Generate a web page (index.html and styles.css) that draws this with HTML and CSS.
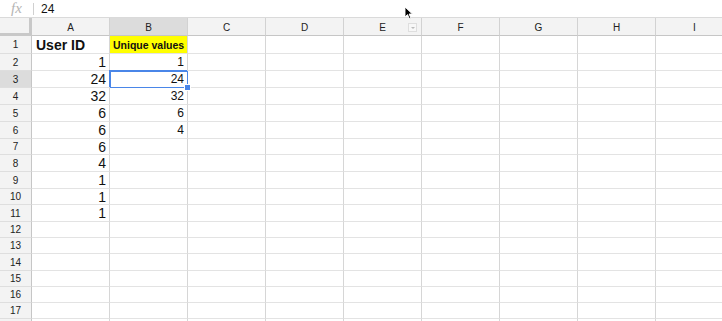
FILE: index.html
```html
<!DOCTYPE html>
<html>
<head>
<meta charset="utf-8">
<link rel="stylesheet" href="styles.css">
</head>
<body>
<div class="app">
  <div class="fbar">
    <div class="fx">fx</div>
    <div class="fsep"></div>
    <div class="fval">24</div>
  </div>
  <div class="sheet">
    <div class="row head">
      <div class="c corner"></div>
      <div class="c ch">A</div>
      <div class="c ch chsel">B</div>
      <div class="c ch">C</div>
      <div class="c ch">D</div>
      <div class="c ch hasdrop">E<span class="drop"></span></div>
      <div class="c ch">F</div>
      <div class="c ch">G</div>
      <div class="c ch">H</div>
      <div class="c ch">I</div>
    </div>
    <div class="row tall">
      <div class="c rh">1</div>
      <div class="c a bold">User ID</div>
      <div class="c yel">Unique values</div>
      <div class="c"></div><div class="c"></div><div class="c"></div><div class="c"></div><div class="c"></div><div class="c"></div><div class="c"></div>
    </div>
    <div class="row">
      <div class="c rh">2</div>
      <div class="c a num">1</div>
      <div class="c b num">1</div>
      <div class="c"></div><div class="c"></div><div class="c"></div><div class="c"></div><div class="c"></div><div class="c"></div><div class="c"></div>
    </div>
    <div class="row">
      <div class="c rh rhsel">3</div>
      <div class="c a num">24</div>
      <div class="c b num sel">24<span class="handle"></span></div>
      <div class="c"></div><div class="c"></div><div class="c"></div><div class="c"></div><div class="c"></div><div class="c"></div><div class="c"></div>
    </div>
    <div class="row">
      <div class="c rh">4</div>
      <div class="c a num">32</div>
      <div class="c b num">32</div>
      <div class="c"></div><div class="c"></div><div class="c"></div><div class="c"></div><div class="c"></div><div class="c"></div><div class="c"></div>
    </div>
    <div class="row">
      <div class="c rh">5</div>
      <div class="c a num">6</div>
      <div class="c b num">6</div>
      <div class="c"></div><div class="c"></div><div class="c"></div><div class="c"></div><div class="c"></div><div class="c"></div><div class="c"></div>
    </div>
    <div class="row">
      <div class="c rh">6</div>
      <div class="c a num">6</div>
      <div class="c b num">4</div>
      <div class="c"></div><div class="c"></div><div class="c"></div><div class="c"></div><div class="c"></div><div class="c"></div><div class="c"></div>
    </div>
    <div class="row short">
      <div class="c rh">7</div>
      <div class="c a num">6</div>
      <div class="c"></div><div class="c"></div><div class="c"></div><div class="c"></div><div class="c"></div><div class="c"></div><div class="c"></div><div class="c"></div>
    </div>
    <div class="row">
      <div class="c rh">8</div>
      <div class="c a num">4</div>
      <div class="c"></div><div class="c"></div><div class="c"></div><div class="c"></div><div class="c"></div><div class="c"></div><div class="c"></div><div class="c"></div>
    </div>
    <div class="row">
      <div class="c rh">9</div>
      <div class="c a num">1</div>
      <div class="c"></div><div class="c"></div><div class="c"></div><div class="c"></div><div class="c"></div><div class="c"></div><div class="c"></div><div class="c"></div>
    </div>
    <div class="row short">
      <div class="c rh">10</div>
      <div class="c a num">1</div>
      <div class="c"></div><div class="c"></div><div class="c"></div><div class="c"></div><div class="c"></div><div class="c"></div><div class="c"></div><div class="c"></div>
    </div>
    <div class="row">
      <div class="c rh">11</div>
      <div class="c a num">1</div>
      <div class="c"></div><div class="c"></div><div class="c"></div><div class="c"></div><div class="c"></div><div class="c"></div><div class="c"></div><div class="c"></div>
    </div>
    <div class="row short">
      <div class="c rh">12</div>
      <div class="c"></div><div class="c"></div><div class="c"></div><div class="c"></div><div class="c"></div><div class="c"></div><div class="c"></div><div class="c"></div><div class="c"></div>
    </div>
    <div class="row short">
      <div class="c rh">13</div>
      <div class="c"></div><div class="c"></div><div class="c"></div><div class="c"></div><div class="c"></div><div class="c"></div><div class="c"></div><div class="c"></div><div class="c"></div>
    </div>
    <div class="row">
      <div class="c rh">14</div>
      <div class="c"></div><div class="c"></div><div class="c"></div><div class="c"></div><div class="c"></div><div class="c"></div><div class="c"></div><div class="c"></div><div class="c"></div>
    </div>
    <div class="row short">
      <div class="c rh">15</div>
      <div class="c"></div><div class="c"></div><div class="c"></div><div class="c"></div><div class="c"></div><div class="c"></div><div class="c"></div><div class="c"></div><div class="c"></div>
    </div>
    <div class="row short">
      <div class="c rh">16</div>
      <div class="c"></div><div class="c"></div><div class="c"></div><div class="c"></div><div class="c"></div><div class="c"></div><div class="c"></div><div class="c"></div><div class="c"></div>
    </div>
    <div class="row short">
      <div class="c rh">17</div>
      <div class="c"></div><div class="c"></div><div class="c"></div><div class="c"></div><div class="c"></div><div class="c"></div><div class="c"></div><div class="c"></div><div class="c"></div>
    </div>
    <div class="row">
      <div class="c rh"></div>
      <div class="c"></div><div class="c"></div><div class="c"></div><div class="c"></div><div class="c"></div><div class="c"></div><div class="c"></div><div class="c"></div><div class="c"></div>
    </div>
  </div>
  <svg class="cursor" width="10" height="14" viewBox="0 0 10 14">
    <path d="M1 1 L1 11 L3.5 8.6 L5.3 12.6 L6.8 11.9 L5.1 8 L8.4 8 Z" fill="#000" stroke="#fff" stroke-width="0.9"/>
  </svg>
</div>
</body>
</html>
```

FILE: styles.css
```css
html, body {
  margin: 0;
  padding: 0;
  background: #ffffff;
}
body {
  width: 722px;
  height: 321px;
  overflow: hidden;
  font-family: "Liberation Sans", Arial, sans-serif;
  color: #222;
}
.app {
  position: relative;
  width: 722px;
  height: 321px;
  overflow: hidden;
}
.fbar {
  height: 17px;
  border-bottom: 1px solid #dadada;
  display: flex;
  align-items: center;
  background: #fff;
}
.fx {
  width: 33px;
  padding-left: 11px;
  box-sizing: border-box;
  font-family: "Liberation Serif", "Times New Roman", serif;
  font-style: italic;
  font-size: 15px;
  color: #b4b4b4;
  line-height: 17px;
}
.fsep {
  width: 1px;
  height: 12px;
  background: #d0d0d0;
}
.fval {
  padding-left: 7px;
  font-size: 12px;
  color: #111;
}
.sheet {
  display: flex;
  flex-direction: column;
}
.row {
  display: grid;
  grid-template-columns: 32px repeat(9, 78px);
  height: 17px;
}
.row.short {
  height: 16px;
}
.row.tall {
  height: 18px;
}
.c {
  box-sizing: border-box;
  border-right: 1px solid #d6d6d6;
  border-bottom: 1px solid #e3e3e3;
  white-space: nowrap;
  overflow: hidden;
  display: flex;
  align-items: center;
}
.row.head {
  height: 18px;
}
.ch {
  background: #f3f3f3;
  border-bottom: 1px solid #c6c6c6;
  border-right: 1px solid #d2d2d2;
  justify-content: center;
  font-size: 10px;
  color: #222;
  position: relative;
  padding-top: 1px;
}
.chsel {
  background: #dcdcdc;
}
.corner {
  background: #f3f3f3;
  border-right: 3px solid #c8c8c8;
  border-bottom: 3px solid #c8c8c8;
}
.drop {
  position: absolute;
  right: 4px;
  top: 5px;
  width: 7px;
  height: 7px;
  border: 1px solid #dedede;
  background: #f7f7f7;
}
.drop::after {
  content: "";
  position: absolute;
  left: 2px;
  top: 3px;
  border-left: 2px solid transparent;
  border-right: 2px solid transparent;
  border-top: 2px solid #bbb;
}
.rh {
  background: #f3f3f3;
  border-right: 1px solid #c6c6c6;
  border-bottom: 1px solid #dedede;
  justify-content: center;
  font-size: 10px;
  color: #222;
}
.rhsel {
  background: #dcdcdc;
}
.bold {
  font-weight: bold;
  font-size: 14px;
  padding-left: 4px;
  color: #111;
}
.yel {
  background: #ffff00;
  font-weight: bold;
  font-size: 10.5px;
  padding-left: 3px;
  color: #111;
}
.num {
  justify-content: flex-end;
  color: #111;
}
.a.num {
  font-size: 14px;
  padding-right: 3px;
}
.b.num {
  font-size: 12px;
  padding-right: 3px;
}
.sel {
  position: relative;
  overflow: visible;
  border-right-color: #4a86e8;
  border-bottom-color: #4a86e8;
  box-shadow: -1px -1px 0 0 #4a86e8, inset 1px 1px 0 0 #4a86e8;
}
.handle {
  position: absolute;
  right: -4px;
  bottom: -4px;
  width: 5px;
  height: 5px;
  background: #4a86e8;
  border: 1px solid #fff;
  z-index: 2;
}
.cursor {
  position: absolute;
  left: 404px;
  top: 6px;
}
```
